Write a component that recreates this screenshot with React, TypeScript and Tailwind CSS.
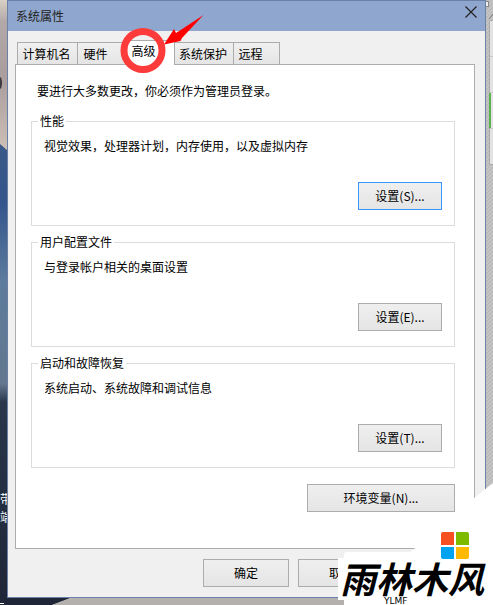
import { useState } from "react";
import clsx from "clsx";

const tabs = [
  { title: "计算机名", style: "w-[61px] pr-0.5" },
  { title: "硬件", style: "w-[49px] pr-3" },
  { title: "高级", style: "w-[50px] pr-3.5" },
  { title: "系统保护", style: "w-[60px] pr-0.5" },
  { title: "远程", style: "w-[47px] pr-3" },
];

const sections = [
  { title: "性能", text: "视觉效果，处理器计划，内存使用，以及虚拟内存", action: "设置(S)..." },
  { title: "用户配置文件", text: "与登录帐户相关的桌面设置", action: "设置(E)..." },
  { title: "启动和故障恢复", text: "系统启动、系统故障和调试信息", action: "设置(T)..." },
];

const buttonStyle =
  "h-7 border bg-linear-to-b from-[#efefef] to-[#e5e5e5] text-center";

function Wallpaper() {
  return (
    <div className="absolute inset-0 overflow-hidden bg-[#c3c3c3]">
      <svg
        className="absolute inset-0 h-full w-full"
        viewBox="0 0 493 605"
        preserveAspectRatio="none"
      >
        <defs>
          <linearGradient id="sky" x1="0" y1="0" x2="0" y2="1">
            <stop offset="0" stopColor="#d9d0c6" />
            <stop offset="0.14" stopColor="#b3a8a9" />
            <stop offset="0.5" stopColor="#a99d9d" />
            <stop offset="1" stopColor="#cfc1b8" />
          </linearGradient>
          <linearGradient id="ridge" x1="0" y1="0" x2="0" y2="1">
            <stop offset="0" stopColor="#3a5988" />
            <stop offset="0.13" stopColor="#34568c" />
            <stop offset="0.3" stopColor="#5d7b9d" />
            <stop offset="0.52" stopColor="#63788f" />
            <stop offset="0.56" stopColor="#29364b" />
            <stop offset="1" stopColor="#1f2638" />
          </linearGradient>
          <pattern id="grain" width="4" height="4" patternUnits="userSpaceOnUse">
            <path d="M0 4L4 0" stroke="#b4b4b4" strokeWidth="1" />
          </pattern>
        </defs>
        <rect width="8" height="155" fill="url(#sky)" />
        <ellipse cx="0" cy="83" rx="2" ry="6" fill="#3c3a40" />
        <path d="M0 144L8 151V598H70L52 605H0Z" fill="url(#ridge)" />
        <path d="M72 598H493V605H52Z" fill="#b3b0ad" />
        <path d="M0 603.500H4" stroke="#fff" />
        <rect x="486" width="7" height="598" fill="url(#grain)" />
        <rect x="484.500" y="1.500" width="4" height="5" fill="#eee" stroke="#888" />
        <path d="M489 19L493 14" stroke="#777" />
        <path d="M493 20.500H489.500V164.500H493" fill="#e3e3e3" stroke="#aaa" />
        <path d="M490 56.500H493M490 92.500H493M490 128.500H493" stroke="#c8c8c8" />
        <rect x="489" y="93" width="2" height="35" fill="#5cb150" />
      </svg>
      <div className="absolute top-[490px] left-0 text-[12px] leading-[18px] text-white">
        <p>带</p>
        <p>端</p>
      </div>
    </div>
  );
}

function Marker() {
  return (
    <svg
      className="pointer-events-none absolute top-[10px] left-[115px] z-20 h-[70px] w-[95px]"
      viewBox="0 0 95 70"
    >
      <circle cx="28" cy="40.500" r="19" fill="none" stroke="#fd3b3b" strokeWidth="7" />
      <path d="M49 34.500L59 19L61 23L88.500 5L67 28L65.500 31Z" fill="#fe0000" />
    </svg>
  );
}

function Watermark() {
  return (
    <div className="pointer-events-none absolute right-0 bottom-0 z-20 h-[122px] w-[155px]">
      <svg className="absolute inset-0 h-full w-full" viewBox="0 0 155 122">
        <path
          d="M155 0L136 15L117 30Q102 44 88 57Q82 63 76 66L72 69H9Q6 69 6 72V75H0V117H6V122H155Z"
          fill="#fff"
        />
        <path d="M105 49H116V62H103V51Q103 49 105 49Z" fill="#f65022" />
        <path d="M118 49H129Q131 49 131 51V62H118Z" fill="#7eba00" />
        <path d="M103 64H116V76H105Q103 76 103 74Z" fill="#00a3ef" />
        <path d="M118 64H131V74Q131 76 129 76H118Z" fill="#ffb900" />
      </svg>
      <div className="absolute bottom-0 left-0.5 flex flex-col gap-0.5 text-black">
        <p className="text-[36px] leading-9 font-bold whitespace-nowrap italic">雨林木风</p>
        <p className="pl-11 font-['DejaVu_Sans'] text-[9px] leading-2">YLMF</p>
      </div>
    </div>
  );
}

export default function App() {
  const [active, setActive] = useState("高级");

  return (
    <div className="relative flex min-h-screen flex-col overflow-hidden px-[7px] pb-[7px] font-['Noto_Sans_CJK_SC',sans-serif] text-[12px] leading-4 text-black">
      <Wallpaper />
      <main className="relative flex flex-1 flex-col border border-[#6b80a5] bg-[#f0f0f0]">
        <header className="flex h-[30px] items-center justify-between bg-[#8fa7ce] pr-1.5 pl-2 text-[#222]">
          <h1>系统属性</h1>
          <button aria-label="关闭" className="-mt-2 p-0.5">
            <svg className="h-3 w-3" viewBox="0 0 12 12" stroke="#222" strokeWidth="1.200">
              <path d="M0.500 0.500L11.500 11.500M11.500 0.500L0.500 11.500" />
            </svg>
          </button>
        </header>

        <div className="flex flex-1 flex-col pt-[9px] pr-[10px] pl-[7px]">
          <div role="tablist" className="relative z-10 -mb-px flex items-end pl-0.5">
            {tabs.map(({ title, style }) => (
              <button
                key={title}
                role="tab"
                aria-selected={active === title}
                onClick={() => setActive(title)}
                className={clsx(
                  "-mr-px border-[#acacac] text-center whitespace-nowrap",
                  style,
                  active === title
                    ? "h-[25px] border-t border-l bg-white pb-1"
                    : "h-[23px] border bg-linear-to-b from-[#f0f0f0] to-[#e5e5e5]"
                )}
              >
                {title}
              </button>
            ))}
          </div>

          <section
            role="tabpanel"
            className="flex flex-1 flex-col border border-[#acacac] bg-white pt-[18px] pr-[19px] pl-[15px]"
          >
            <p className="pl-1.5">要进行大多数更改，你必须作为管理员登录。</p>

            <div className="mt-[14px] flex flex-col gap-2">
              {sections.map(({ title, text, action }, index) => (
                <fieldset
                  key={title}
                  className="h-[113px] border border-[#dcdcdc] pr-3 pl-1.5"
                >
                  <legend className="px-0.5">{title}</legend>
                  <p className="pt-[9px] pl-1.5">{text}</p>
                  <div className="mt-7 flex justify-end">
                    <button
                      className={clsx(
                        buttonStyle,
                        "w-[84px]",
                        index === 0 ? "border-[#3399ff]" : "border-[#acacac]"
                      )}
                    >
                      {action}
                    </button>
                  </div>
                </fieldset>
              ))}
            </div>

            <div className="mt-4 flex justify-end">
              <button className={clsx(buttonStyle, "w-[148px] border-[#acacac]")}>
                环境变量(N)...
              </button>
            </div>
          </section>

          <footer className="flex justify-end gap-[9px] py-[10px] pr-[91px]">
            <button className={clsx(buttonStyle, "w-[86px] border-[#acacac]")}>确定</button>
            <button className={clsx(buttonStyle, "w-[86px] border-[#acacac]")}>取消</button>
          </footer>
        </div>
      </main>
      <Marker />
      <Watermark />
    </div>
  );
}
